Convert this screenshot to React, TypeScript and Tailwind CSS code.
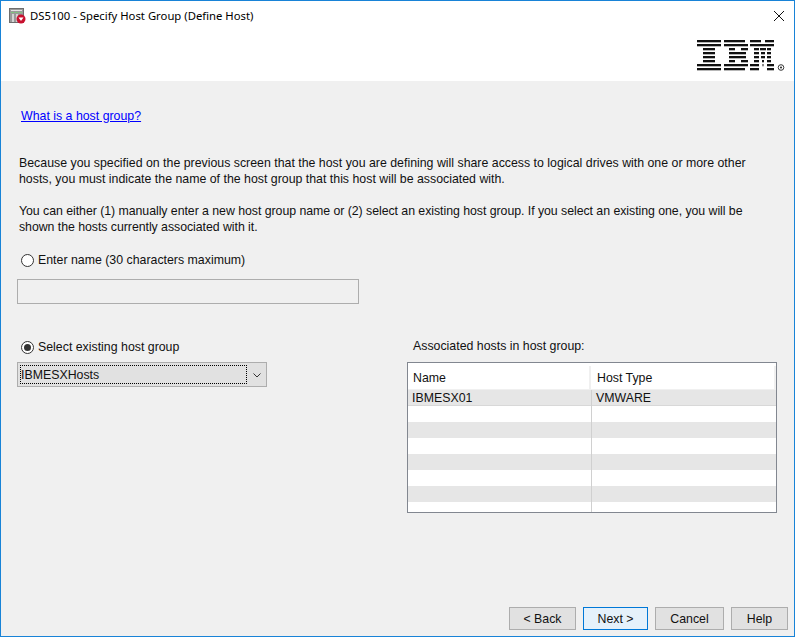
const font = "font-['Liberation_Sans',Arial,sans-serif]";

function TitleIcon() {
  return (
    <svg width="17" height="16" viewBox="0 0 17 16" className="shrink-0">
      <rect x="0.5" y="0.5" width="14" height="14" fill="#9a9a9a" stroke="#6e6e6e" />
      <rect x="2" y="2" width="11" height="1" fill="#e4e4e4" />
      <rect x="2" y="4" width="3" height="1" fill="#7ec87e" />
      <rect x="6" y="4" width="3" height="1" fill="#7ec87e" />
      <rect x="10" y="4" width="3" height="1" fill="#7ec87e" />
      <rect x="3" y="6" width="2" height="8" fill="#d4d4d4" />
      <rect x="7" y="6" width="2" height="8" fill="#d4d4d4" />
      <circle cx="12" cy="11" r="4.500" fill="#c8102e" />
      <path d="M9.500 9.500h5L12 13z" fill="#fff" />
    </svg>
  );
}

// one row per stripe of the logo, each entry is [x, width]
const ibmStripes: number[][][] = [
  [[0, 24], [27, 21], [53, 11], [68, 9]],
  [[0, 24], [27, 24], [53, 13], [66, 11]],
  [[6, 12], [32, 6], [44, 7], [57, 5], [63, 6], [70, 4]],
  [[6, 12], [32, 17], [57, 5], [64, 4], [70, 4]],
  [[6, 12], [32, 17], [57, 5], [64, 4], [70, 4]],
  [[6, 12], [32, 6], [44, 7], [57, 5], [65, 2], [70, 4]],
  [[0, 24], [27, 24], [53, 9], [65.500, 1], [70, 7]],
  [[0, 24], [27, 21], [53, 9], [70, 7]],
];

function IbmLogo() {
  return (
    <svg width="90" height="32" viewBox="0 0 90 32">
      {ibmStripes.map((row, y) =>
        row.map(([x, w]) => <rect key={`${y}-${x}`} x={x} y={y * 4} width={w} height="2.300" fill="#111" />)
      )}
      <circle cx="84" cy="27.500" r="2.800" fill="none" stroke="#222" strokeWidth="0.900" />
      <circle cx="84" cy="27.500" r="1" fill="#222" />
    </svg>
  );
}

function Radio({ checked }: { checked?: boolean }) {
  return (
    <span className="flex h-[13px] w-[13px] shrink-0 items-center justify-center rounded-full border border-[#333] bg-white">
      {checked && <span className="h-[7px] w-[7px] rounded-full bg-[#333]" />}
    </span>
  );
}

function Btn({ label, width, active }: { label: string; width: string; active?: boolean }) {
  return (
    <button
      className={`flex h-[23px] items-center justify-center border text-[#111] ${width} ${
        active ? "border-[#0078d7] bg-[#e5f1fb]" : "border-[#adadad] bg-[#e1e1e1]"
      }`}
    >
      {label}
    </button>
  );
}

export default function App() {
  const rows = [
    ["IBMESX01", "VMWARE"],
    ["", ""],
    ["", ""],
    ["", ""],
    ["", ""],
    ["", ""],
    ["", ""],
    ["", ""],
  ];

  return (
    <div className={`flex h-[637px] w-[795px] flex-col border border-[#1883d7] bg-[#f0f0f0] text-[12.350px] leading-4 text-[#111] ${font}`}>
      {/* header */}
      <div className="flex h-[80px] shrink-0 flex-col bg-white">
        <div className="flex h-[29px] items-center pl-[8px] pr-[9px] pt-[1px]">
          <TitleIcon />
          <span className="-mt-px ml-[4px] font-['Noto_Sans',sans-serif] text-[11.300px] text-black">DS5100 - Specify Host Group (Define Host)</span>
          <svg width="12" height="12" viewBox="0 0 12 12" className="ml-auto" stroke="#111" strokeWidth="1">
            <path d="M1 1l10 10M11 1L1 11" />
          </svg>
        </div>
        <div className="flex justify-end pr-[7px] pt-[10px]">
          <IbmLogo />
        </div>
      </div>

      <div className="flex min-h-0 flex-1 flex-col pl-[16px] pr-[17px]">
        <a className="ml-[4px] mt-[27px] w-fit text-[#0000ff] underline">What is a host group?</a>

        <p className="ml-[2px] mt-[31px] w-[745px]">
          Because you specified on the previous screen that the host you are defining will share access to logical drives with one or more other hosts, you must indicate the name of the host group that this host will be associated with.
        </p>
        <p className="ml-[2px] mt-[16px] w-[745px] tracking-[-0.05px]">
          You can either (1) manually enter a new host group name or (2) select an existing host group. If you select an existing one, you will be shown the hosts currently associated with it.
        </p>

        <label className="ml-[4px] mt-[17px] flex items-center gap-[4px]">
          <Radio />
          <span>Enter name (30 characters maximum)</span>
        </label>
        <div className="mt-[11px] h-[25px] w-[342px] border border-[#adadad] bg-[#f0f0f0]" />

        <div className="mt-[34px] flex items-start justify-between">
          <div className="w-[250px]">
            <label className="ml-[4px] mt-[1px] flex items-center gap-[4px]">
              <Radio checked />
              <span>Select existing host group</span>
            </label>
            <div className="mt-[7px] flex h-[25px] items-center border border-[#adadad] bg-[#e1e1e1] p-[2px]">
              <div className="flex h-full flex-1 items-center border border-dotted border-black">IBMESXHosts</div>
              <svg width="17" height="12" viewBox="0 0 17 12" fill="none" stroke="#333" strokeWidth="1">
                <path d="M6.500 4.500l3.500 3.500 3.500-3.500" />
              </svg>
            </div>
          </div>

          <div className="w-[370px]">
            <div className="pl-[6px]">Associated hosts in host group:</div>
            <div className="mt-[8px] h-[151px] overflow-hidden border border-[#828790] bg-white">
              <div className="grid h-[27px] grid-cols-[183px_1fr] border-b border-[#f0f0f0] pt-[3px]">
                <div className="flex items-center border-r-2 border-[#f0f0f0] pl-[5px]">Name</div>
                <div className="flex items-center border-r-2 border-[#f0f0f0] pl-[6px]">Host Type</div>
              </div>
              {rows.map((row, i) => (
                <div
                  key={i}
                  className={`grid h-[16px] grid-cols-[184px_1fr] ${i % 2 === 0 ? "bg-[#e6e6e6]" : "bg-white"} ${i === 0 ? "border-b border-[#d8d8d8]" : ""}`}
                >
                  <div className="flex items-center border-r border-[#d0d0d0] pl-[4px]">{row[0]}</div>
                  <div className="flex items-center pl-[4px]">{row[1]}</div>
                </div>
              ))}
            </div>
          </div>
        </div>

        <div className="mb-[6px] -mr-[11px] mt-auto flex justify-end gap-[7px]">
          <Btn label="< Back" width="w-[67px]" />
          <Btn label="Next >" width="w-[65px]" active />
          <Btn label="Cancel" width="w-[69px]" />
          <Btn label="Help" width="w-[57px]" />
        </div>
      </div>
    </div>
  );
}
